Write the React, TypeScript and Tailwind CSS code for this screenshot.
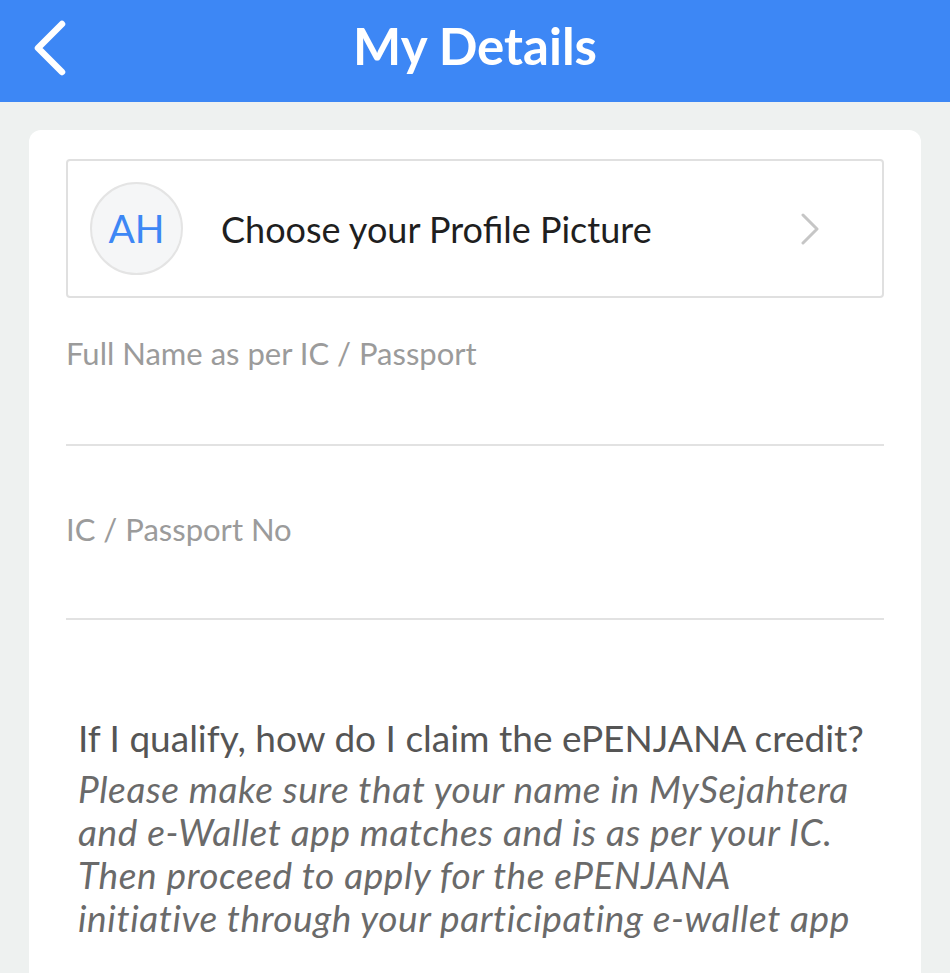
export default function App() {
  return (
    <div className="min-h-[973px] bg-[#eef1f0] font-['Lato','Noto_Sans',sans-serif]">
      {/* Header */}
      <header className="relative flex h-[102px] items-center justify-center bg-[#3d87f5] pb-[12px]">
        <svg className="absolute left-[28px] top-[18px]" width="44" height="62" viewBox="0 0 44 62" fill="none">
          <polyline points="34,6 10,30 34,54" stroke="white" strokeWidth="6.5" strokeLinecap="round" strokeLinejoin="round" />
        </svg>
        <h1 className="text-[51px] font-bold leading-none text-white">My Details</h1>
      </header>

      <div className="px-[29px] pt-[28px]">
        <div className="min-h-[860px] rounded-t-[12px] bg-white px-[37px] pt-[29px]">
          {/* Profile picture row */}
          <div className="flex h-[139px] items-center rounded-[4px] border-2 border-[#e0e0e0] pl-[22px] pr-[62px]">
            <div className="flex h-[93px] w-[93px] items-center justify-center rounded-full border-2 border-[#e4e4e4] bg-[#f5f6f7]">
              <span className="text-[39px] text-[#3d87f5]">AH</span>
            </div>
            <span className="ml-[38px] flex-1 text-[36px] text-[#1f1f1f]">Choose your Profile Picture</span>
            <svg width="20" height="32" viewBox="0 0 20 32" fill="none">
              <polyline points="3,2 17,16 3,30" stroke="#c6c6c6" strokeWidth="3" strokeLinecap="round" strokeLinejoin="round" />
            </svg>
          </div>

          {/* Fields */}
          <div className="mt-[36px] border-b-2 border-[#e2e2e2] pb-[72px]">
            <p className="text-[31px] leading-[38px] text-[#9b9b9b]">Full Name as per IC / Passport</p>
          </div>
          <div className="mt-[64px] border-b-2 border-[#e2e2e2] pb-[70px]">
            <p className="text-[31px] leading-[38px] text-[#9b9b9b]">IC / Passport No</p>
          </div>

          {/* Info */}
          <div className="mt-[96px] px-[12px]">
            <p className="text-[37px] leading-[44px] text-[#555]">If I qualify, how do I claim the ePENJANA credit?</p>
            <p className="mt-[7px] text-[37px] italic leading-[43px] tracking-[0.6px] text-[#6a6a6a]">
              Please make sure that your name in MySejahtera
              <br />
              and e-Wallet app matches and is as per your IC.
              <br />
              Then proceed to apply for the ePENJANA
              <br />
              initiative through your participating e-wallet app
            </p>
          </div>
        </div>
      </div>
    </div>
  );
}
